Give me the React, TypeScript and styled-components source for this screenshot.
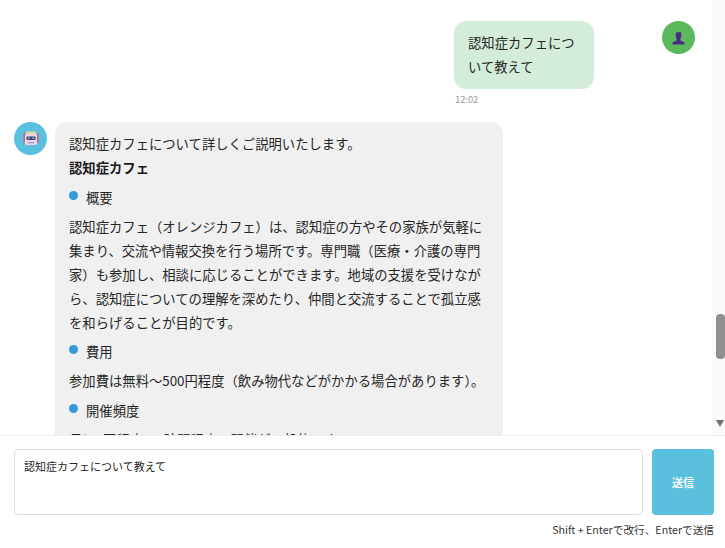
import { createGlobalStyle } from "styled-components"
import styled from "styled-components"

const GlobalStyle = createGlobalStyle`
    html, body {
        margin: 0;
        padding: 0;
        height: 100%;
        background: #fff;
        overflow: hidden;
    }
    * {
        box-sizing: border-box;
    }
    body {
        font-family: "Noto Sans CJK JP", "Noto Sans", sans-serif;
        color: #262626;
    }
`

const Page = styled.div`
    width: 725px;
    height: 548px;
    display: flex;
    flex-direction: column;
`

const ChatArea = styled.div`
    height: 435px;
    display: flex;
`

const Messages = styled.div`
    flex: 1;
    overflow: hidden;
    padding: 21px 17px 0 14px;
    display: flex;
    flex-direction: column;
    gap: 16px;
`

const ScrollTrack = styled.div`
    position: relative;
    width: 13px;
    background: #fafafa;
`

const ScrollThumb = styled.div`
    position: absolute;
    top: 314px;
    left: 4px;
    width: 9px;
    height: 45px;
    border-radius: 4px;
    background: #8f8f8f;
`

const ScrollArrow = styled.div`
    position: absolute;
    top: 420px;
    left: 4px;
    border-left: 4px solid transparent;
    border-right: 4px solid transparent;
    border-top: 7px solid #6f6f6f;
`

const UserRow = styled.div`
    display: flex;
    justify-content: flex-end;
    gap: 68px;
`

const UserColumn = styled.div`
    width: 140px;
    display: flex;
    flex-direction: column;
`

const UserBubble = styled.div`
    background: #d4edda;
    border-radius: 12px;
    padding: 10px 14px;
    font-size: 13.33px;
    line-height: 24px;
    word-break: break-all;
`

const Time = styled.div`
    margin: 4px 0 0 1px;
    font-size: 9.3px;
    line-height: 13px;
    color: #999;
`

const BotRow = styled.div`
    display: flex;
    align-items: flex-start;
    gap: 8px;
`

const Avatar = styled.div<{ $bg: string }>`
    flex: none;
    width: 33px;
    height: 33px;
    border-radius: 50%;
    background: ${({ $bg }) => $bg};
    display: flex;
    align-items: center;
    justify-content: center;
`

const BotBubble = styled.div`
    width: 448px;
    background: #f0f0f0;
    border-radius: 12px;
    padding: 10px 14px;
    font-size: 13.33px;
    line-height: 24px;
`

const Paragraph = styled.p`
    margin: 0 0 5.3px;
`

const Title = styled.strong`
    display: block;
    font-weight: 700;
    color: #1a1a1a;
`

const Heading = styled.div<{ $first?: boolean }>`
    display: flex;
    margin-top: ${({ $first }) => ($first ? "5.55px" : "0")};
    margin-bottom: 5.3px;
`

const Dot = styled.span`
    flex: none;
    width: 9px;
    height: 9px;
    margin: 5px 8px 0 0;
    border-radius: 50%;
    background: #3498db;
`

const Composer = styled.div`
    flex: 1;
    border-top: 1px solid #eee;
    padding: 13px 11px 0 14px;
`

const InputRow = styled.div`
    display: flex;
    gap: 9px;
`

const MessageInput = styled.div`
    flex: 1;
    height: 66px;
    border: 1px solid #ddd;
    border-radius: 4px;
    padding: 7px 9px;
    font-size: 11px;
    line-height: 18px;
`

const SendButton = styled.button`
    width: 62px;
    height: 66px;
    border: none;
    border-radius: 4px;
    background: #5bc0de;
    color: #fff;
    font-family: inherit;
    font-size: 11px;
    font-weight: 700;
`

const Hint = styled.div`
    margin-top: 7px;
    text-align: right;
    font-size: 10.67px;
    line-height: 16px;
    color: #333;
`

const PersonIcon = () => (
    <svg width="13" height="14" viewBox="0 0 13 14">
        <path d="M4 1.5 L9 1 L9.3 5 C9.3 6.6 8.6 7.5 8.2 8 L8.4 9.4 L12.3 11.2 L12.6 13.4 L0.4 13.4 L0.7 11.2 L4.6 9.4 L4.8 8 C4.3 7.5 3.7 6.6 3.7 5 Z" fill="#4a2a86" />
    </svg>
)

const RobotIcon = () => (
    <svg width="16" height="15" viewBox="0 0 16 15">
        <rect x="0.5" y="2.5" width="1.6" height="9" fill="#e0508f" />
        <rect x="13.9" y="2.5" width="1.6" height="9" fill="#e0508f" />
        <rect x="3" y="0.5" width="10" height="3" rx="1.2" fill="#e8d79a" />
        <rect x="2" y="3" width="12" height="11" rx="1.5" fill="#e8d8ea" />
        <rect x="3.5" y="5.5" width="9" height="3.5" rx="1" fill="#3f4270" />
        <rect x="5" y="6.5" width="1.6" height="1.4" fill="#8fd6f2" />
        <rect x="9.4" y="6.5" width="1.6" height="1.4" fill="#8fd6f2" />
        <rect x="5" y="11" width="6" height="1.4" fill="#a79bc0" />
    </svg>
)

export default function App() {
    return (
        <Page>
            <GlobalStyle />
            <ChatArea>
                <Messages>
                    <UserRow>
                        <UserColumn>
                            <UserBubble>認知症カフェについて教えて</UserBubble>
                            <Time>12:02</Time>
                        </UserColumn>
                        <Avatar $bg="#5cb85c">
                            <PersonIcon />
                        </Avatar>
                    </UserRow>
                    <BotRow>
                        <Avatar $bg="#5bc0de">
                            <RobotIcon />
                        </Avatar>
                        <BotBubble>
                            認知症カフェについて詳しくご説明いたします。
                            <Title>認知症カフェ</Title>
                            <Heading $first>
                                <Dot />
                                概要
                            </Heading>
                            <Paragraph>
                                認知症カフェ（オレンジカフェ）は、認知症の方やその家族が気軽に集まり、交流や情報交換を行う場所です。専門職（医療・介護の専門家）も参加し、相談に応じることができます。地域の支援を受けながら、認知症についての理解を深めたり、仲間と交流することで孤立感を和らげることが目的です。
                            </Paragraph>
                            <Heading>
                                <Dot />
                                費用
                            </Heading>
                            <Paragraph>参加費は無料〜500円程度（飲み物代などがかかる場合があります）。</Paragraph>
                            <Heading>
                                <Dot />
                                開催頻度
                            </Heading>
                            <Paragraph>月に1回程度、2時間程度の開催が一般的です。</Paragraph>
                        </BotBubble>
                    </BotRow>
                </Messages>
                <ScrollTrack>
                    <ScrollThumb />
                    <ScrollArrow />
                </ScrollTrack>
            </ChatArea>
            <Composer>
                <InputRow>
                    <MessageInput>認知症カフェについて教えて</MessageInput>
                    <SendButton>送信</SendButton>
                </InputRow>
                <Hint>Shift + Enterで改行、Enterで送信</Hint>
            </Composer>
        </Page>
    )
}
